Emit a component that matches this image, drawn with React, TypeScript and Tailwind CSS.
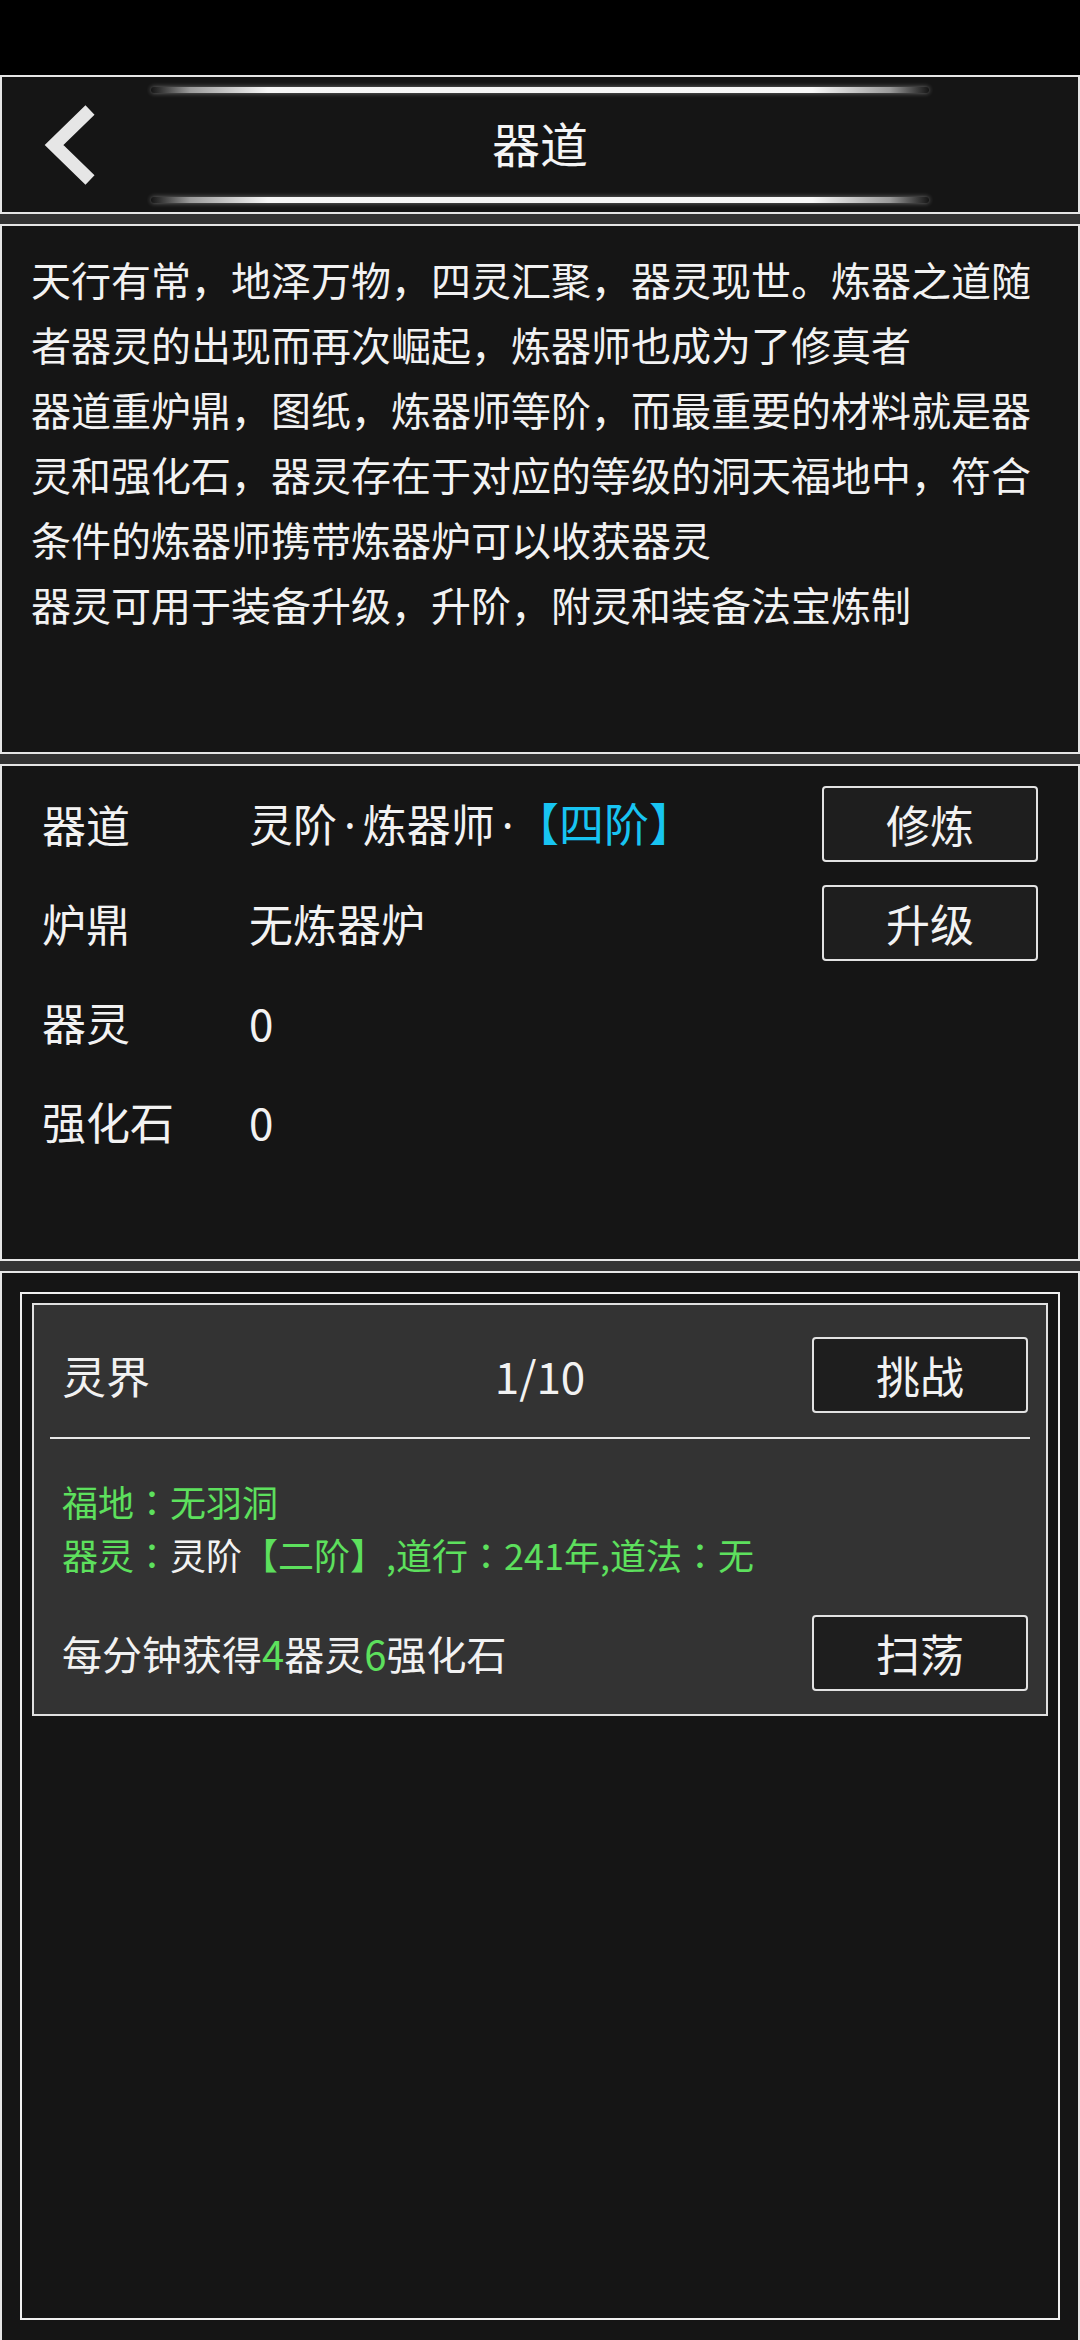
import React from 'react';

const descLines = [
  '天行有常，地泽万物，四灵汇聚，器灵现世。炼器之道随',
  '者器灵的出现而再次崛起，炼器师也成为了修真者',
  '器道重炉鼎，图纸，炼器师等阶，而最重要的材料就是器',
  '灵和强化石，器灵存在于对应的等级的洞天福地中，符合',
  '条件的炼器师携带炼器炉可以收获器灵',
  '器灵可用于装备升级，升阶，附灵和装备法宝炼制',
];

const GlowLine: React.FC = () => (
  <div className="h-[6px] w-[778px] rounded-full bg-[linear-gradient(90deg,rgba(255,255,255,0)_0%,#9a9a9a_5%,#f4f4f4_15%,#f7f7f7_85%,#9a9a9a_95%,rgba(255,255,255,0)_100%)] shadow-[0_0_5px_rgba(255,255,255,0.4)]" />
);

const Btn: React.FC<{ label: string }> = ({ label }) => (
  <button className="w-[216px] h-[76px] shrink-0 rounded-[4px] border-2 border-[#e2e2e2] bg-[#1e1e1e] text-[44px] leading-none text-[#f2f2f2] flex items-center justify-center">
    {label}
  </button>
);

const Dot: React.FC = () => (
  <span className="font-['Noto_Sans',sans-serif] mx-[7px]">·</span>
);

// full-width colon drawn centred, as in the reference
const Colon: React.FC = () => (
  <span className="font-['Noto_Sans_CJK_JP',sans-serif]">：</span>
);

const StatRow: React.FC<{ label: string; children: React.ReactNode; action?: string }> = ({ label, children, action }) => (
  <div className="h-[99px] flex items-center">
    <div className="w-[207px] shrink-0">{label}</div>
    <div className="flex-1 whitespace-nowrap">{children}</div>
    {action && <Btn label={action} />}
  </div>
);

const App: React.FC = () => {
  return (
    <div className="w-[1080px] h-[2340px] overflow-hidden bg-[#333333] flex flex-col font-['Noto_Sans_CJK_SC','Noto_Sans',sans-serif] text-[#f2f2f2]">
      {/* status bar */}
      <div className="h-[75px] shrink-0 bg-black" />

      {/* header */}
      <div className="h-[139px] shrink-0 border-2 border-[#e6e6e6] bg-[#151515] flex flex-col items-center pt-[10px]">
        <GlowLine />
        <div className="w-full h-[104px] grid grid-cols-[1fr_auto_1fr] items-center">
          <div className="pl-[36px] flex items-center">
            <svg width="60" height="90" viewBox="0 0 60 90">
              <polyline points="52,10 16,45 52,80" fill="none" stroke="#e6e6e6" strokeWidth="13" strokeLinecap="butt" strokeLinejoin="miter" />
            </svg>
          </div>
          <div className="text-[48px] leading-none text-[#f5f5f5] pb-[6px]">器道</div>
          <div />
        </div>
        <GlowLine />
      </div>

      {/* description */}
      <div className="mt-[10px] h-[530px] shrink-0 border-2 border-[#e6e6e6] bg-[#151515] px-[29px] pt-[21px]">
        {descLines.map((line, i) => (
          <div key={i} className="text-[40px] leading-[65px] whitespace-nowrap">{line}</div>
        ))}
      </div>

      {/* stats */}
      <div className="mt-[10px] h-[497px] shrink-0 border-2 border-[#e6e6e6] bg-[#151515] pl-[40px] pr-[40px] pt-[8px] text-[44px] leading-none">
        <StatRow label="器道" action="修炼">
          灵阶<Dot />炼器师<Dot /><span className="ml-[16px] text-[#18c4f2] text-[45px]">【四阶】</span>
        </StatRow>
        <StatRow label="炉鼎" action="升级">无炼器炉</StatRow>
        <StatRow label="器灵">0</StatRow>
        <StatRow label="强化石">0</StatRow>
      </div>

      {/* spirit realm */}
      <div className="mt-[10px] flex-1 border-x-2 border-t-2 border-[#e6e6e6] bg-[#151515] pt-[19px] pl-[18px] pr-[18px] pb-[20px] flex flex-col">
        <div className="flex-1 border-2 border-[#f0f0f0] bg-[#151515] pt-[9px] px-[10px]">
          <div className="border-2 border-[#e0e0e0] bg-[#333333]">
            <div className="px-[18px] pt-[32px] pb-[24px] grid grid-cols-[1fr_auto_1fr] items-center">
              <div className="pl-[10px] text-[44px] leading-none">灵界</div>
              <div className="text-[44px] leading-none">1/10</div>
              <div className="flex justify-end">
                <Btn label="挑战" />
              </div>
            </div>
            <div className="mx-[16px] h-[2px] bg-[#e8e8e8]" />
            <div className="pt-[36px] pl-[28px] text-[36px] leading-[53px] text-[#5de05d]">
              <div>福地<Colon />无羽洞</div>
              <div className="whitespace-nowrap">
                器灵<Colon /><span className="text-[#f2f2f2]">灵阶</span>【二阶】,道行<Colon />241年,道法<Colon />无
              </div>
            </div>
            <div className="mt-[34px] pl-[28px] pr-[18px] pb-[23px] flex items-center justify-between">
              <div className="text-[40px] leading-none">
                每分钟获得<span className="text-[#5de05d]">4</span>器灵<span className="text-[#5de05d]">6</span>强化石
              </div>
              <Btn label="扫荡" />
            </div>
          </div>
        </div>
      </div>
    </div>
  );
};

export default App;
